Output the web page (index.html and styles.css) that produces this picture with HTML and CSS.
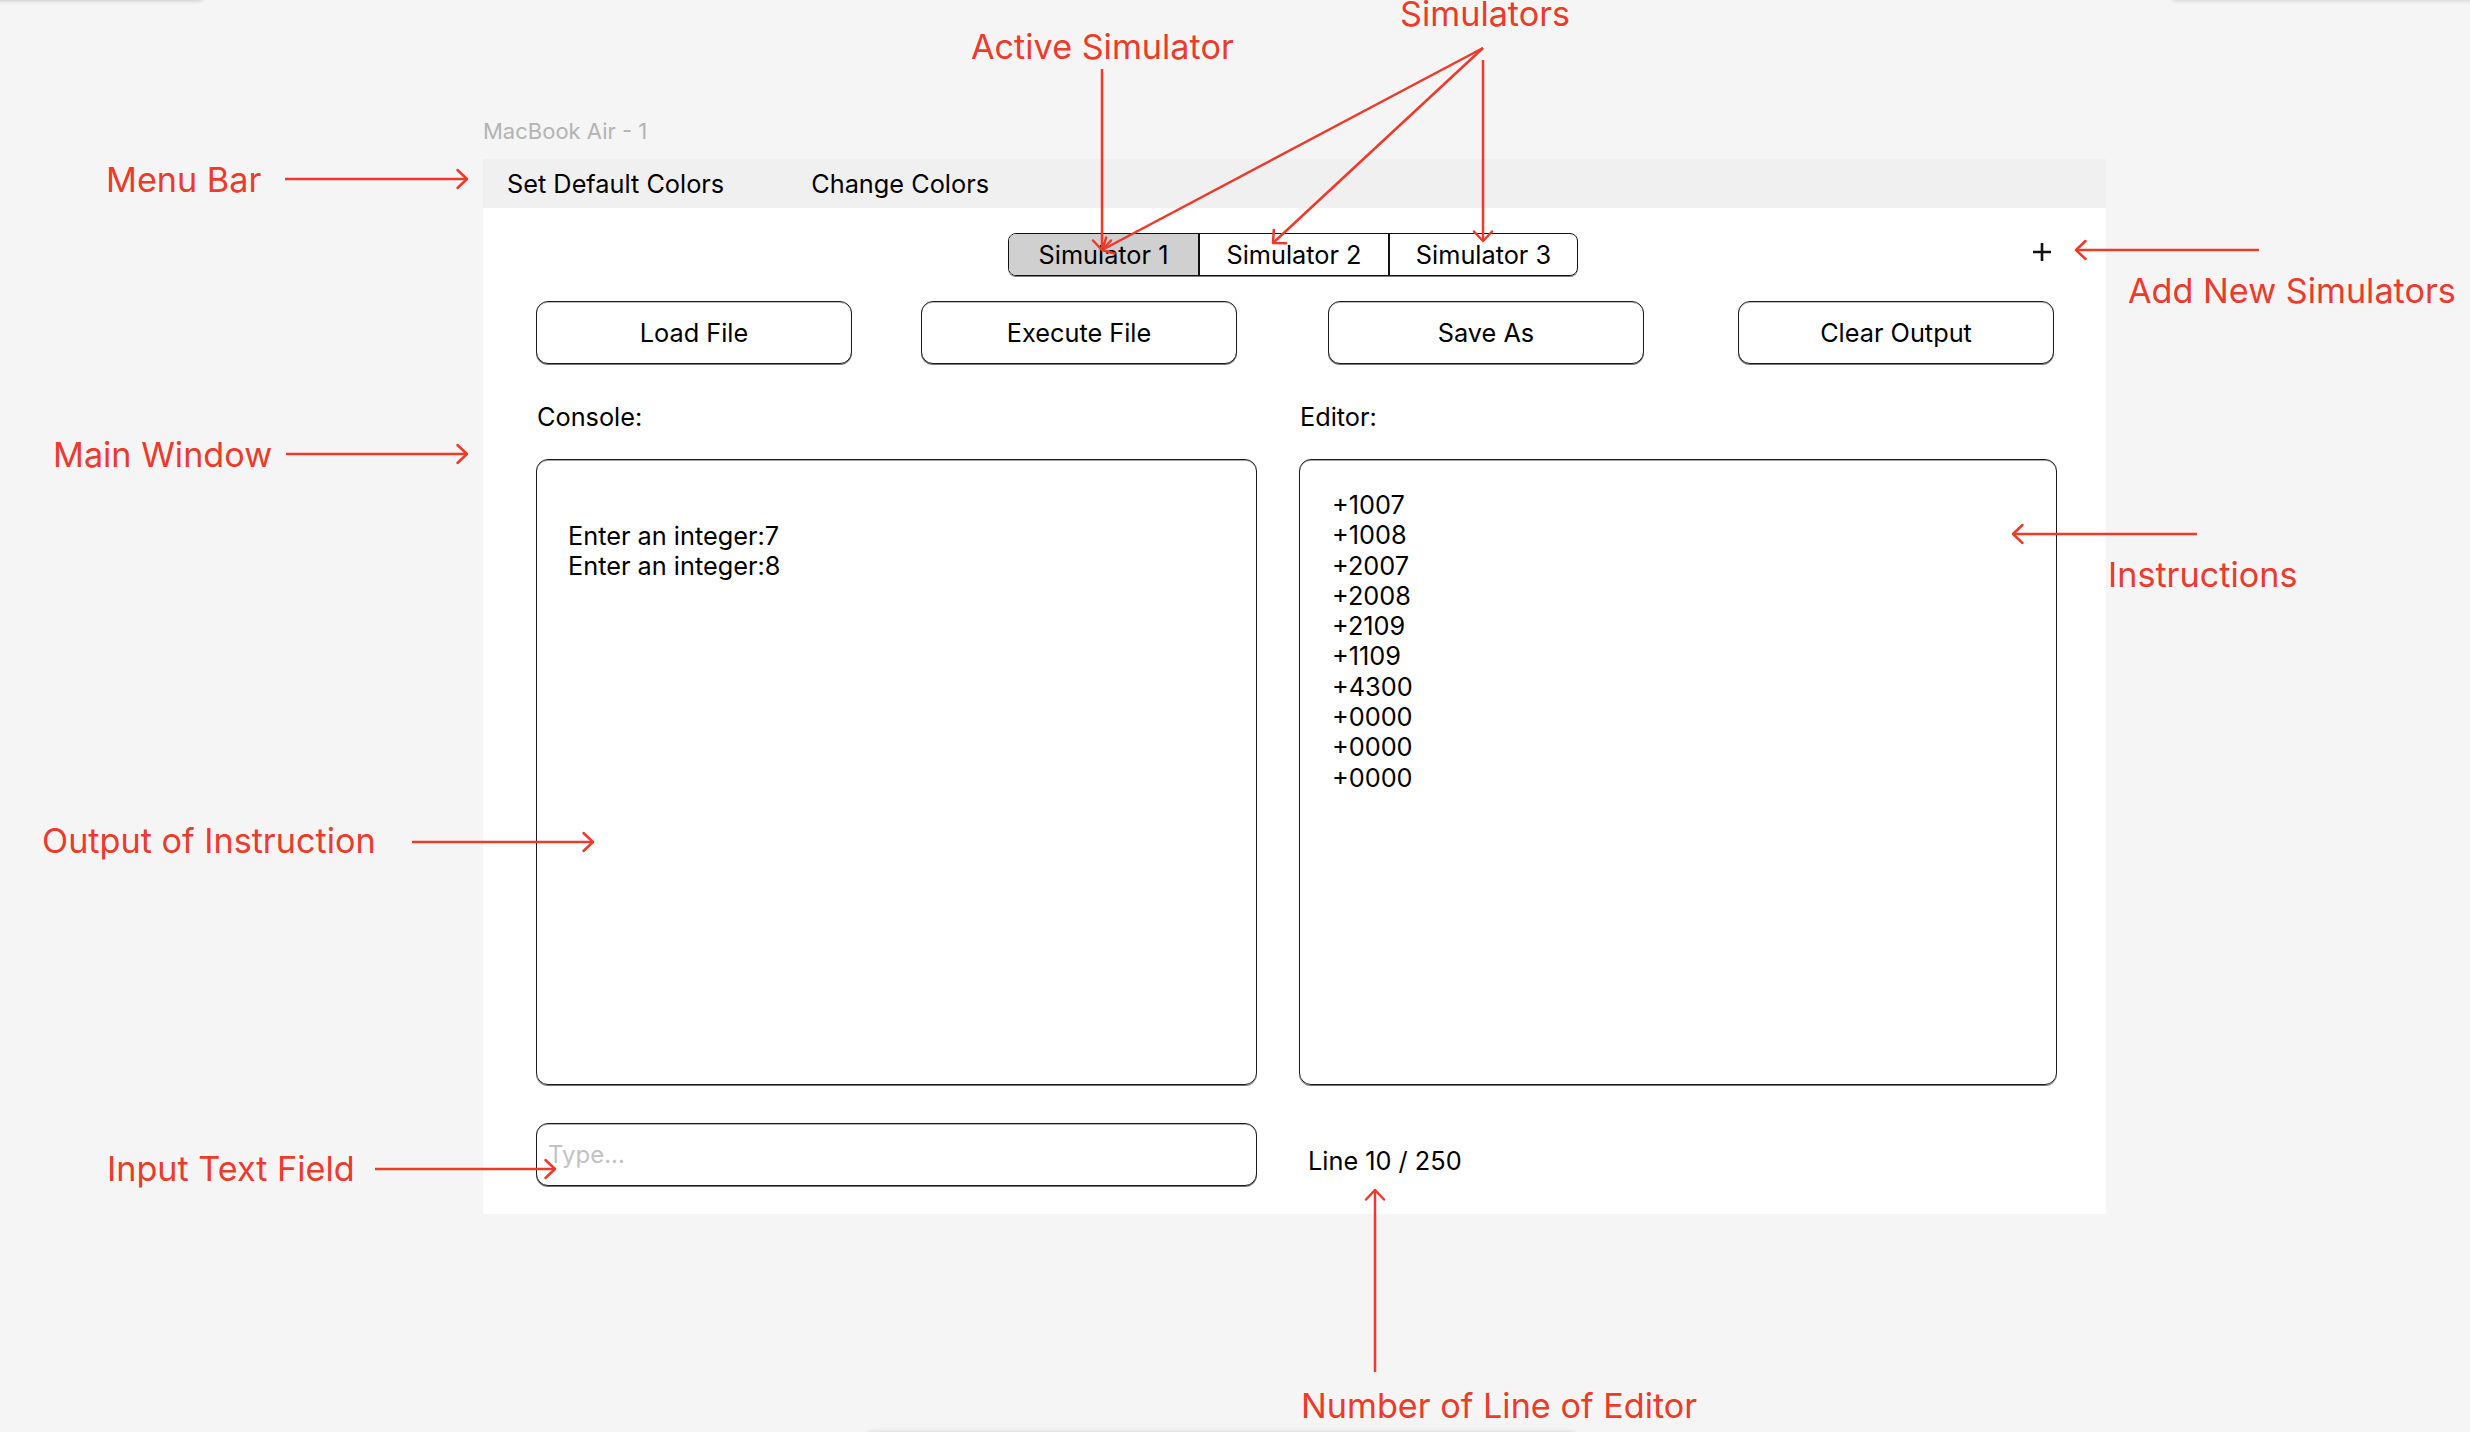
FILE: index.html
```html
<!DOCTYPE html>
<html lang="en">
<head>
<meta charset="utf-8">
<title>Simulator wireframe</title>
<link rel="stylesheet" href="styles.css">
</head>
<body>
<div class="canvas">
  <div class="edge edge-tl"></div>
  <div class="edge edge-tr"></div>
  <div class="edge edge-b"></div>

  <div class="frame-label">MacBook Air - 1</div>
  <div class="frame">
    <div class="menubar">
      <span class="menu-item">Set Default Colors</span>
      <span class="menu-item">Change Colors</span>
    </div>
    <div class="content">
      <div class="tabs-row">
        <div class="tabs">
          <div class="tab active">Simulator 1</div>
          <div class="tab">Simulator 2</div>
          <div class="tab">Simulator 3</div>
        </div>
        <svg class="add" viewBox="0 0 18 18" width="18" height="18" aria-label="Add simulator">
          <path d="M9 0 V18 M0 9 H18" stroke="#111" stroke-width="2.6" fill="none"/>
        </svg>
      </div>
      <div class="buttons">
        <button class="btn">Load File</button>
        <button class="btn btn-b">Execute File</button>
        <button class="btn btn-c">Save As</button>
        <button class="btn btn-d">Clear Output</button>
      </div>
      <div class="panes">
        <div class="label">Console:</div>
        <div class="label">Editor:</div>
        <div class="box console">
          <div>Enter an integer:7</div>
          <div>Enter an integer:8</div>
        </div>
        <div class="box editor">
          <div>+1007</div>
          <div>+1008</div>
          <div>+2007</div>
          <div>+2008</div>
          <div>+2109</div>
          <div>+1109</div>
          <div>+4300</div>
          <div>+0000</div>
          <div>+0000</div>
          <div>+0000</div>
        </div>
        <input class="type-input" type="text" placeholder="Type...">
        <div class="line-count">Line 10 / 250</div>
      </div>
    </div>
  </div>

  <svg class="arrows" width="2470" height="1432" viewBox="0 0 2470 1432">
    <defs>
      <marker id="ah" viewBox="0 0 24 24" refX="12" refY="12" markerWidth="24" markerHeight="24" markerUnits="userSpaceOnUse" orient="auto">
        <path d="M2.5 3 L12 12 L2.5 21" fill="none" stroke="#ec3a2b" stroke-width="2.5" stroke-linecap="round" stroke-linejoin="round"/>
      </marker>
    </defs>
    <g stroke="#ec3a2b" stroke-width="2.5" fill="none" marker-end="url(#ah)">
      <line x1="285" y1="179" x2="467" y2="179"/>
      <line x1="286" y1="454" x2="467" y2="454"/>
      <line x1="412" y1="842" x2="593" y2="842"/>
      <line x1="375" y1="1169" x2="555" y2="1169"/>
      <line x1="1375" y1="1372" x2="1375" y2="1190"/>
      <line x1="2259" y1="250" x2="2076" y2="250"/>
      <line x1="2197" y1="534" x2="2013" y2="534"/>
      <line x1="1102" y1="69" x2="1102" y2="250"/>
      <line x1="1483" y1="48" x2="1102" y2="250"/>
      <line x1="1483" y1="48" x2="1273" y2="243"/>
      <line x1="1483" y1="60" x2="1483" y2="241"/>
    </g>
  </svg>

  <div class="note note-sims">Simulators</div>
  <div class="note note-active">Active Simulator</div>
  <div class="note note-menu">Menu Bar</div>
  <div class="note note-main">Main Window</div>
  <div class="note note-output">Output of Instruction</div>
  <div class="note note-input">Input Text Field</div>
  <div class="note note-lines">Number of Line of Editor</div>
  <div class="note note-add">Add New Simulators</div>
  <div class="note note-instr">Instructions</div>
</div>
</body>
</html>
```

FILE: styles.css
```css
* { box-sizing: border-box; }

html, body {
  margin: 0;
  padding: 0;
}

body {
  width: 2470px;
  height: 1432px;
  overflow: hidden;
  background: #f5f5f5;
  font-family: Inter, "Noto Sans", "Liberation Sans", sans-serif;
  color: #000;
}

.canvas {
  position: relative;
  width: 2470px;
  height: 1432px;
  padding: 118px 0 0 483px;
  overflow: hidden;
}

/* faint shadows of neighbouring frames just off the canvas */
.edge {
  position: absolute;
  height: 200px;
  background: #f5f5f5;
  border-radius: 6px;
}
.edge-tl { left: -40px; top: -200px; width: 244px; box-shadow: 0 1px 4px rgba(0, 0, 0, 0.18); }
.edge-tr { left: 2171px; top: -200px; width: 340px; box-shadow: 0 1px 4px rgba(0, 0, 0, 0.14); }
.edge-b { left: 866px; top: 1432px; width: 710px; box-shadow: 0 -1px 4px rgba(0, 0, 0, 0.10); }

.frame-label {
  font-size: 22px;
  line-height: 26px;
  color: #b3b3b3;
  margin-bottom: 15px;
}

.frame {
  width: 1623px;
  height: 1055px;
  background: #fff;
}

.menubar {
  height: 49px;
  background: #f0f0f0;
  display: flex;
  align-items: center;
  gap: 87px;
  padding-left: 24px;
  font-size: 25.3px;
  line-height: 30px;
}

.content {
  padding: 25px 48px 28px 53px;
}

.tabs-row {
  display: grid;
  grid-template-columns: 1fr auto 1fr;
  height: 43px;
  margin: 0 -48px 0 -53px;
}

.tabs {
  grid-column: 2;
  display: flex;
  height: 43px;
  margin-left: -3px;
  border: 1px solid #111;
  border-radius: 8px;
  overflow: hidden;
  box-shadow: 0 1px 0 rgba(0, 0, 0, 0.5);
}

.tab {
  width: 189.5px;
  display: flex;
  align-items: center;
  justify-content: center;
  font-size: 25.3px;
  line-height: 30px;
}
.tab + .tab { border-left: 2px solid #111; }
.tab.active { background: #d0d0d0; }

.add {
  grid-column: 3;
  justify-self: end;
  align-self: center;
  margin-right: 55px;
  margin-bottom: 5px;
  display: block;
}

.buttons {
  display: flex;
  margin-top: 25px;
}

.btn {
  width: 316px;
  height: 63px;
  margin: 0;
  padding: 0;
  background: #fff;
  border: 1px solid #1a1a1a;
  border-radius: 12px;
  box-shadow: 0 1px 0 rgba(0, 0, 0, 0.55), inset 0 1px 0 rgba(0, 0, 0, 0.25);
  font-family: inherit;
  font-size: 25.3px;
  line-height: 30px;
  color: #000;
}
.btn-b { margin-left: 69px; }
.btn-c { margin-left: 91px; }
.btn-d { margin-left: 94px; }

.panes {
  display: grid;
  grid-template-columns: 721px 758px;
  column-gap: 42px;
  margin-top: 38px;
}

.label {
  font-size: 25.3px;
  line-height: 30px;
  padding-left: 1px;
}

.box {
  margin-top: 27px;
  height: 626px;
  border: 1px solid #1a1a1a;
  border-radius: 12px;
  box-shadow: 0 1px 0 rgba(0, 0, 0, 0.55), inset 0 1px 0 rgba(0, 0, 0, 0.35);
  font-size: 25.3px;
}

.console {
  padding: 61px 0 0 31px;
  line-height: 30px;
}

.editor {
  padding: 30px 0 0 32px;
  line-height: 30.3px;
}

.type-input {
  margin: 38px 0 0 0;
  height: 63px;
  width: 100%;
  padding: 0 0 0 11px;
  border: 1px solid #1a1a1a;
  border-radius: 12px;
  box-shadow: 0 1px 0 rgba(0, 0, 0, 0.55), inset 0 1px 0 rgba(0, 0, 0, 0.3);
  background: #fff;
  font-family: inherit;
  font-size: 24px;
  color: #000;
  outline: none;
}
.type-input::placeholder { color: #c2c2c2; }

.line-count {
  margin-top: 61px;
  padding-left: 9px;
  font-size: 25.3px;
  line-height: 30px;
}

.arrows {
  position: absolute;
  left: 0;
  top: 0;
  pointer-events: none;
}

.note {
  position: absolute;
  font-size: 34.2px;
  line-height: 40px;
  color: #ec3a2b;
  white-space: nowrap;
}
.note-sims { left: 1400px; top: 0; line-height: 28px; }
.note-active { left: 971px; top: 27px; }
.note-menu { left: 106px; top: 160px; }
.note-main { left: 53px; top: 435px; }
.note-output { left: 42px; top: 821px; }
.note-input { left: 107px; top: 1149px; }
.note-lines { left: 1301px; top: 1386px; }
.note-add { left: 2128px; top: 271px; }
.note-instr { left: 2108px; top: 555px; }
```
